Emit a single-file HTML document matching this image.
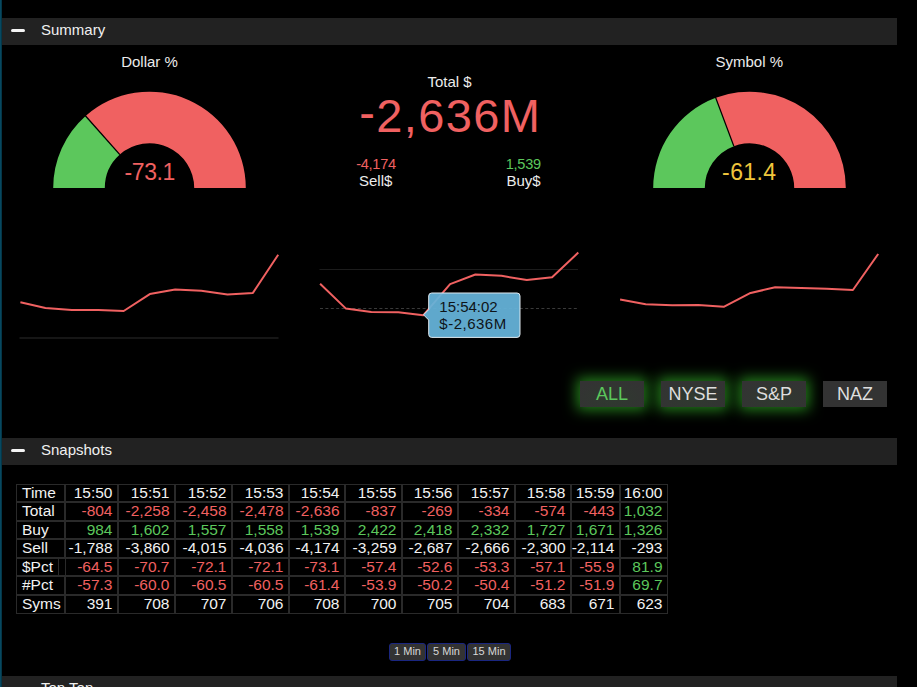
<!DOCTYPE html>
<html><head><meta charset="utf-8">
<style>
html,body{margin:0;padding:0;background:#000;width:917px;height:687px;overflow:hidden;}
body{position:relative;font-family:"Liberation Sans",sans-serif;color:#ececec;}
.a{position:absolute;white-space:nowrap;}
.edge{position:absolute;left:0;top:0;width:1px;height:687px;background:#074860;border-right:1px solid #043748;}
.hdr{position:absolute;left:2px;width:895px;height:27px;background:#222;}
.mi{position:absolute;left:8.6px;top:11px;width:14px;height:3px;background:#f4f4f4;border-radius:1.5px;}
.btn{position:absolute;top:381px;width:64px;height:26px;background:#333;font-size:18px;line-height:26px;text-align:center;color:#dedede;}
.glow{box-shadow:0 0 14px 3px rgba(44,150,34,0.85);background:radial-gradient(ellipse 60% 70% at 50% 65%,#2f3a2f,#333 100%);}
.cell{position:absolute;border:1px solid #2a2a2a;}
.sb{position:absolute;top:643px;height:16px;border:1px solid #1a2680;border-radius:3px;background:#333;color:#d8d8d8;font-size:11px;line-height:14px;text-align:center;}
</style></head>
<body>
<div class="edge"></div>
<div class="hdr" style="top:18px"><div class="mi"></div></div><div class="a" style="left:41px;top:22.30px;font-size:15px;line-height:15px;color:#f0f0f0;">Summary</div>
<div class="hdr" style="top:438px"><div class="mi"></div></div><div class="a" style="left:41px;top:442.30px;font-size:15px;line-height:15px;color:#f0f0f0;">Snapshots</div>
<div class="hdr" style="top:676px"><div class="mi"></div></div><div class="a" style="left:41px;top:680.30px;font-size:15px;line-height:15px;color:#f0f0f0;">Top Ten</div>
<svg class="a" style="left:0;top:0" width="917" height="420">
<path d="M53.20,188.00 A96.3,96.3 0 0 1 85.59,115.96 L119.83,154.56 A44.7,44.7 0 0 0 104.80,188.00 Z" fill="#5cc75c"/><path d="M85.59,115.96 A96.3,96.3 0 0 1 245.80,188.00 L194.20,188.00 A44.7,44.7 0 0 0 119.83,154.56 Z" fill="#f06161"/><line x1="119.83" y1="154.56" x2="84.93" y2="115.22" stroke="#000" stroke-width="1.3"/>
<path d="M653.20,188.00 A96.3,96.3 0 0 1 715.74,97.81 L733.83,146.14 A44.7,44.7 0 0 0 704.80,188.00 Z" fill="#5cc75c"/><path d="M715.74,97.81 A96.3,96.3 0 0 1 845.80,188.00 L794.20,188.00 A44.7,44.7 0 0 0 733.83,146.14 Z" fill="#f06161"/><line x1="733.83" y1="146.14" x2="715.39" y2="96.87" stroke="#000" stroke-width="1.3"/>
<line x1="19.5" y1="338" x2="278.5" y2="338" stroke="#161616" stroke-width="2"/>
<line x1="319.5" y1="269.5" x2="578" y2="269.5" stroke="#1c1c1c" stroke-width="1"/>
<line x1="320" y1="308.5" x2="577" y2="308.5" stroke="#3a3a3a" stroke-width="1" stroke-dasharray="3,2.4"/>
<polyline points="20.4,302.3 45.4,307.9 71.8,309.9 98.5,309.9 123.7,311.0 149.8,294.1 175.2,289.5 201.3,290.8 227.5,294.4 252.9,292.9 278.2,254.8" fill="none" stroke="#f06161" stroke-width="2" stroke-linejoin="round"/>
<polyline points="320.1,283.8 345.7,308.4 371.3,312.0 398.3,312.3 423.2,315.3 450.1,284.1 475.4,274.5 501.5,275.8 526.8,280.1 552.1,277.2 578.3,252.6" fill="none" stroke="#f06161" stroke-width="2" stroke-linejoin="round"/>
<polyline points="620.1,299.5 645.7,304.2 672.2,305.2 698.3,304.9 723.7,306.8 749.6,293.3 775.2,287.2 801.3,287.9 826.7,288.8 852.9,290.0 878.2,254.0" fill="none" stroke="#f06161" stroke-width="2" stroke-linejoin="round"/>
</svg>
<div class="a" style="left:-0.5px;width:300px;text-align:center;top:53.90px;font-size:15px;line-height:15px;color:#ececec;">Dollar %</div>
<div class="a" style="left:599.3px;width:300px;text-align:center;top:53.90px;font-size:15px;line-height:15px;color:#ececec;">Symbol %</div>
<div class="a" style="left:299.6px;width:300px;text-align:center;top:74.30px;font-size:15px;line-height:15px;color:#ececec;">Total $</div>
<div class="a" style="left:300.3px;width:300px;text-align:center;top:91.91px;font-size:47px;line-height:47px;color:#f06161;letter-spacing:1.4px"><span style="position:relative;top:-3px">-</span>2,636M</div>
<div class="a" style="left:226px;width:300px;text-align:center;top:156.84px;font-size:14.6px;line-height:14.6px;color:#f06161;letter-spacing:-0.3px">-4,174</div>
<div class="a" style="left:225.7px;width:300px;text-align:center;top:172.80px;font-size:15px;line-height:15px;color:#ececec;">Sell$</div>
<div class="a" style="left:373.29999999999995px;width:300px;text-align:center;top:156.84px;font-size:14.6px;line-height:14.6px;color:#5cc75c;letter-spacing:-0.3px">1,539</div>
<div class="a" style="left:373.5px;width:300px;text-align:center;top:172.80px;font-size:15px;line-height:15px;color:#ececec;">Buy$</div>
<div class="a" style="left:-0.30000000000001137px;width:300px;text-align:center;top:161.43px;font-size:23px;line-height:23px;color:#f06161;letter-spacing:-0.4px">-73.1</div>
<div class="a" style="left:599.3px;width:300px;text-align:center;top:161.43px;font-size:23px;line-height:23px;color:#f0c53c;letter-spacing:0.4px">-61.4</div>
<svg class="a" style="left:415px;top:285px" width="115" height="60">
<path d="M13.7,11 Q13.7,8 16.7,8 L102,8 Q105,8 105,11 L105,49.4 Q105,52.4 102,52.4 L16.7,52.4 Q13.7,52.4 13.7,49.4 L13.7,35 L8.5,29.8 L13.7,24.6 Z" fill="rgba(101,179,217,0.94)" stroke="#dfe8ee" stroke-width="1"/>
</svg>
<div class="a" style="left:439.3px;top:298.90px;font-size:15px;line-height:15px;color:#0e1418;">15:54:02</div>
<div class="a" style="left:439.3px;top:315.50px;font-size:15px;line-height:15px;color:#0e1418;letter-spacing:0.5px">$-2,636M</div>
<div class="btn glow" style="left:580px;color:#5cc75c">ALL</div>
<div class="btn glow" style="left:661px;color:#dedede">NYSE</div>
<div class="btn glow" style="left:742px;color:#dedede">S&amp;P</div>
<div class="btn" style="left:823px;color:#dedede">NAZ</div>
<div class="cell" style="left:16px;top:484px;width:47px;height:16px"></div><div class="a" style="left:22px;top:485.08px;font-size:15.5px;line-height:15.5px;color:#f2f2f2;">Time</div><div class="cell" style="left:65px;top:484px;width:51px;height:16px"></div><div class="a" style="left:-187.5px;width:300px;text-align:right;top:485.08px;font-size:15.5px;line-height:15.5px;color:#f2f2f2;">15:50</div><div class="cell" style="left:118px;top:484px;width:55px;height:16px"></div><div class="a" style="left:-130.5px;width:300px;text-align:right;top:485.08px;font-size:15.5px;line-height:15.5px;color:#f2f2f2;">15:51</div><div class="cell" style="left:175px;top:484px;width:55px;height:16px"></div><div class="a" style="left:-73.5px;width:300px;text-align:right;top:485.08px;font-size:15.5px;line-height:15.5px;color:#f2f2f2;">15:52</div><div class="cell" style="left:232px;top:484px;width:55px;height:16px"></div><div class="a" style="left:-16.5px;width:300px;text-align:right;top:485.08px;font-size:15.5px;line-height:15.5px;color:#f2f2f2;">15:53</div><div class="cell" style="left:289px;top:484px;width:54px;height:16px"></div><div class="a" style="left:39.5px;width:300px;text-align:right;top:485.08px;font-size:15.5px;line-height:15.5px;color:#f2f2f2;">15:54</div><div class="cell" style="left:345px;top:484px;width:55px;height:16px"></div><div class="a" style="left:96.5px;width:300px;text-align:right;top:485.08px;font-size:15.5px;line-height:15.5px;color:#f2f2f2;">15:55</div><div class="cell" style="left:402px;top:484px;width:54px;height:16px"></div><div class="a" style="left:152.5px;width:300px;text-align:right;top:485.08px;font-size:15.5px;line-height:15.5px;color:#f2f2f2;">15:56</div><div class="cell" style="left:458px;top:484px;width:55px;height:16px"></div><div class="a" style="left:209.5px;width:300px;text-align:right;top:485.08px;font-size:15.5px;line-height:15.5px;color:#f2f2f2;">15:57</div><div class="cell" style="left:515px;top:484px;width:54px;height:16px"></div><div class="a" style="left:265.5px;width:300px;text-align:right;top:485.08px;font-size:15.5px;line-height:15.5px;color:#f2f2f2;">15:58</div><div class="cell" style="left:571px;top:484px;width:47px;height:16px"></div><div class="a" style="left:314.5px;width:300px;text-align:right;top:485.08px;font-size:15.5px;line-height:15.5px;color:#f2f2f2;">15:59</div><div class="cell" style="left:620px;top:484px;width:46px;height:16px"></div><div class="a" style="left:362.5px;width:300px;text-align:right;top:485.08px;font-size:15.5px;line-height:15.5px;color:#f2f2f2;">16:00</div><div class="cell" style="left:16px;top:502px;width:47px;height:17px"></div><div class="a" style="left:22px;top:503.08px;font-size:15.5px;line-height:15.5px;color:#f2f2f2;">Total</div><div class="cell" style="left:65px;top:502px;width:51px;height:17px"></div><div class="a" style="left:-187.5px;width:300px;text-align:right;top:503.08px;font-size:15.5px;line-height:15.5px;color:#f06161;">-804</div><div class="cell" style="left:118px;top:502px;width:55px;height:17px"></div><div class="a" style="left:-130.5px;width:300px;text-align:right;top:503.08px;font-size:15.5px;line-height:15.5px;color:#f06161;">-2,258</div><div class="cell" style="left:175px;top:502px;width:55px;height:17px"></div><div class="a" style="left:-73.5px;width:300px;text-align:right;top:503.08px;font-size:15.5px;line-height:15.5px;color:#f06161;">-2,458</div><div class="cell" style="left:232px;top:502px;width:55px;height:17px"></div><div class="a" style="left:-16.5px;width:300px;text-align:right;top:503.08px;font-size:15.5px;line-height:15.5px;color:#f06161;">-2,478</div><div class="cell" style="left:289px;top:502px;width:54px;height:17px"></div><div class="a" style="left:39.5px;width:300px;text-align:right;top:503.08px;font-size:15.5px;line-height:15.5px;color:#f06161;">-2,636</div><div class="cell" style="left:345px;top:502px;width:55px;height:17px"></div><div class="a" style="left:96.5px;width:300px;text-align:right;top:503.08px;font-size:15.5px;line-height:15.5px;color:#f06161;">-837</div><div class="cell" style="left:402px;top:502px;width:54px;height:17px"></div><div class="a" style="left:152.5px;width:300px;text-align:right;top:503.08px;font-size:15.5px;line-height:15.5px;color:#f06161;">-269</div><div class="cell" style="left:458px;top:502px;width:55px;height:17px"></div><div class="a" style="left:209.5px;width:300px;text-align:right;top:503.08px;font-size:15.5px;line-height:15.5px;color:#f06161;">-334</div><div class="cell" style="left:515px;top:502px;width:54px;height:17px"></div><div class="a" style="left:265.5px;width:300px;text-align:right;top:503.08px;font-size:15.5px;line-height:15.5px;color:#f06161;">-574</div><div class="cell" style="left:571px;top:502px;width:47px;height:17px"></div><div class="a" style="left:314.5px;width:300px;text-align:right;top:503.08px;font-size:15.5px;line-height:15.5px;color:#f06161;">-443</div><div class="cell" style="left:620px;top:502px;width:46px;height:17px"></div><div class="a" style="left:362.5px;width:300px;text-align:right;top:503.08px;font-size:15.5px;line-height:15.5px;color:#5cc75c;">1,032</div><div class="cell" style="left:16px;top:521px;width:47px;height:16px"></div><div class="a" style="left:22px;top:522.08px;font-size:15.5px;line-height:15.5px;color:#f2f2f2;">Buy</div><div class="cell" style="left:65px;top:521px;width:51px;height:16px"></div><div class="a" style="left:-187.5px;width:300px;text-align:right;top:522.08px;font-size:15.5px;line-height:15.5px;color:#5cc75c;">984</div><div class="cell" style="left:118px;top:521px;width:55px;height:16px"></div><div class="a" style="left:-130.5px;width:300px;text-align:right;top:522.08px;font-size:15.5px;line-height:15.5px;color:#5cc75c;">1,602</div><div class="cell" style="left:175px;top:521px;width:55px;height:16px"></div><div class="a" style="left:-73.5px;width:300px;text-align:right;top:522.08px;font-size:15.5px;line-height:15.5px;color:#5cc75c;">1,557</div><div class="cell" style="left:232px;top:521px;width:55px;height:16px"></div><div class="a" style="left:-16.5px;width:300px;text-align:right;top:522.08px;font-size:15.5px;line-height:15.5px;color:#5cc75c;">1,558</div><div class="cell" style="left:289px;top:521px;width:54px;height:16px"></div><div class="a" style="left:39.5px;width:300px;text-align:right;top:522.08px;font-size:15.5px;line-height:15.5px;color:#5cc75c;">1,539</div><div class="cell" style="left:345px;top:521px;width:55px;height:16px"></div><div class="a" style="left:96.5px;width:300px;text-align:right;top:522.08px;font-size:15.5px;line-height:15.5px;color:#5cc75c;">2,422</div><div class="cell" style="left:402px;top:521px;width:54px;height:16px"></div><div class="a" style="left:152.5px;width:300px;text-align:right;top:522.08px;font-size:15.5px;line-height:15.5px;color:#5cc75c;">2,418</div><div class="cell" style="left:458px;top:521px;width:55px;height:16px"></div><div class="a" style="left:209.5px;width:300px;text-align:right;top:522.08px;font-size:15.5px;line-height:15.5px;color:#5cc75c;">2,332</div><div class="cell" style="left:515px;top:521px;width:54px;height:16px"></div><div class="a" style="left:265.5px;width:300px;text-align:right;top:522.08px;font-size:15.5px;line-height:15.5px;color:#5cc75c;">1,727</div><div class="cell" style="left:571px;top:521px;width:47px;height:16px"></div><div class="a" style="left:314.5px;width:300px;text-align:right;top:522.08px;font-size:15.5px;line-height:15.5px;color:#5cc75c;">1,671</div><div class="cell" style="left:620px;top:521px;width:46px;height:16px"></div><div class="a" style="left:362.5px;width:300px;text-align:right;top:522.08px;font-size:15.5px;line-height:15.5px;color:#5cc75c;">1,326</div><div class="cell" style="left:16px;top:539px;width:47px;height:17px"></div><div class="a" style="left:22px;top:540.08px;font-size:15.5px;line-height:15.5px;color:#f2f2f2;">Sell</div><div class="cell" style="left:65px;top:539px;width:51px;height:17px"></div><div class="a" style="left:-187.5px;width:300px;text-align:right;top:540.08px;font-size:15.5px;line-height:15.5px;color:#f2f2f2;">-1,788</div><div class="cell" style="left:118px;top:539px;width:55px;height:17px"></div><div class="a" style="left:-130.5px;width:300px;text-align:right;top:540.08px;font-size:15.5px;line-height:15.5px;color:#f2f2f2;">-3,860</div><div class="cell" style="left:175px;top:539px;width:55px;height:17px"></div><div class="a" style="left:-73.5px;width:300px;text-align:right;top:540.08px;font-size:15.5px;line-height:15.5px;color:#f2f2f2;">-4,015</div><div class="cell" style="left:232px;top:539px;width:55px;height:17px"></div><div class="a" style="left:-16.5px;width:300px;text-align:right;top:540.08px;font-size:15.5px;line-height:15.5px;color:#f2f2f2;">-4,036</div><div class="cell" style="left:289px;top:539px;width:54px;height:17px"></div><div class="a" style="left:39.5px;width:300px;text-align:right;top:540.08px;font-size:15.5px;line-height:15.5px;color:#f2f2f2;">-4,174</div><div class="cell" style="left:345px;top:539px;width:55px;height:17px"></div><div class="a" style="left:96.5px;width:300px;text-align:right;top:540.08px;font-size:15.5px;line-height:15.5px;color:#f2f2f2;">-3,259</div><div class="cell" style="left:402px;top:539px;width:54px;height:17px"></div><div class="a" style="left:152.5px;width:300px;text-align:right;top:540.08px;font-size:15.5px;line-height:15.5px;color:#f2f2f2;">-2,687</div><div class="cell" style="left:458px;top:539px;width:55px;height:17px"></div><div class="a" style="left:209.5px;width:300px;text-align:right;top:540.08px;font-size:15.5px;line-height:15.5px;color:#f2f2f2;">-2,666</div><div class="cell" style="left:515px;top:539px;width:54px;height:17px"></div><div class="a" style="left:265.5px;width:300px;text-align:right;top:540.08px;font-size:15.5px;line-height:15.5px;color:#f2f2f2;">-2,300</div><div class="cell" style="left:571px;top:539px;width:47px;height:17px"></div><div class="a" style="left:314.5px;width:300px;text-align:right;top:540.08px;font-size:15.5px;line-height:15.5px;color:#f2f2f2;">-2,114</div><div class="cell" style="left:620px;top:539px;width:46px;height:17px"></div><div class="a" style="left:362.5px;width:300px;text-align:right;top:540.08px;font-size:15.5px;line-height:15.5px;color:#f2f2f2;">-293</div><div class="cell" style="left:16px;top:558px;width:41px;height:16px"></div><div class="cell" style="left:59px;top:558px;width:6px;height:16px;border-left:none;border-right:none"></div><div class="a" style="left:22px;top:559.08px;font-size:15.5px;line-height:15.5px;color:#f2f2f2;">$Pct</div><div class="cell" style="left:65px;top:558px;width:51px;height:16px"></div><div class="a" style="left:-187.5px;width:300px;text-align:right;top:559.08px;font-size:15.5px;line-height:15.5px;color:#f06161;">-64.5</div><div class="cell" style="left:118px;top:558px;width:55px;height:16px"></div><div class="a" style="left:-130.5px;width:300px;text-align:right;top:559.08px;font-size:15.5px;line-height:15.5px;color:#f06161;">-70.7</div><div class="cell" style="left:175px;top:558px;width:55px;height:16px"></div><div class="a" style="left:-73.5px;width:300px;text-align:right;top:559.08px;font-size:15.5px;line-height:15.5px;color:#f06161;">-72.1</div><div class="cell" style="left:232px;top:558px;width:55px;height:16px"></div><div class="a" style="left:-16.5px;width:300px;text-align:right;top:559.08px;font-size:15.5px;line-height:15.5px;color:#f06161;">-72.1</div><div class="cell" style="left:289px;top:558px;width:54px;height:16px"></div><div class="a" style="left:39.5px;width:300px;text-align:right;top:559.08px;font-size:15.5px;line-height:15.5px;color:#f06161;">-73.1</div><div class="cell" style="left:345px;top:558px;width:55px;height:16px"></div><div class="a" style="left:96.5px;width:300px;text-align:right;top:559.08px;font-size:15.5px;line-height:15.5px;color:#f06161;">-57.4</div><div class="cell" style="left:402px;top:558px;width:54px;height:16px"></div><div class="a" style="left:152.5px;width:300px;text-align:right;top:559.08px;font-size:15.5px;line-height:15.5px;color:#f06161;">-52.6</div><div class="cell" style="left:458px;top:558px;width:55px;height:16px"></div><div class="a" style="left:209.5px;width:300px;text-align:right;top:559.08px;font-size:15.5px;line-height:15.5px;color:#f06161;">-53.3</div><div class="cell" style="left:515px;top:558px;width:54px;height:16px"></div><div class="a" style="left:265.5px;width:300px;text-align:right;top:559.08px;font-size:15.5px;line-height:15.5px;color:#f06161;">-57.1</div><div class="cell" style="left:571px;top:558px;width:47px;height:16px"></div><div class="a" style="left:314.5px;width:300px;text-align:right;top:559.08px;font-size:15.5px;line-height:15.5px;color:#f06161;">-55.9</div><div class="cell" style="left:620px;top:558px;width:46px;height:16px"></div><div class="a" style="left:362.5px;width:300px;text-align:right;top:559.08px;font-size:15.5px;line-height:15.5px;color:#5cc75c;">81.9</div><div class="cell" style="left:16px;top:576px;width:47px;height:17px"></div><div class="a" style="left:22px;top:577.08px;font-size:15.5px;line-height:15.5px;color:#f2f2f2;">#Pct</div><div class="cell" style="left:65px;top:576px;width:51px;height:17px"></div><div class="a" style="left:-187.5px;width:300px;text-align:right;top:577.08px;font-size:15.5px;line-height:15.5px;color:#f06161;">-57.3</div><div class="cell" style="left:118px;top:576px;width:55px;height:17px"></div><div class="a" style="left:-130.5px;width:300px;text-align:right;top:577.08px;font-size:15.5px;line-height:15.5px;color:#f06161;">-60.0</div><div class="cell" style="left:175px;top:576px;width:55px;height:17px"></div><div class="a" style="left:-73.5px;width:300px;text-align:right;top:577.08px;font-size:15.5px;line-height:15.5px;color:#f06161;">-60.5</div><div class="cell" style="left:232px;top:576px;width:55px;height:17px"></div><div class="a" style="left:-16.5px;width:300px;text-align:right;top:577.08px;font-size:15.5px;line-height:15.5px;color:#f06161;">-60.5</div><div class="cell" style="left:289px;top:576px;width:54px;height:17px"></div><div class="a" style="left:39.5px;width:300px;text-align:right;top:577.08px;font-size:15.5px;line-height:15.5px;color:#f06161;">-61.4</div><div class="cell" style="left:345px;top:576px;width:55px;height:17px"></div><div class="a" style="left:96.5px;width:300px;text-align:right;top:577.08px;font-size:15.5px;line-height:15.5px;color:#f06161;">-53.9</div><div class="cell" style="left:402px;top:576px;width:54px;height:17px"></div><div class="a" style="left:152.5px;width:300px;text-align:right;top:577.08px;font-size:15.5px;line-height:15.5px;color:#f06161;">-50.2</div><div class="cell" style="left:458px;top:576px;width:55px;height:17px"></div><div class="a" style="left:209.5px;width:300px;text-align:right;top:577.08px;font-size:15.5px;line-height:15.5px;color:#f06161;">-50.4</div><div class="cell" style="left:515px;top:576px;width:54px;height:17px"></div><div class="a" style="left:265.5px;width:300px;text-align:right;top:577.08px;font-size:15.5px;line-height:15.5px;color:#f06161;">-51.2</div><div class="cell" style="left:571px;top:576px;width:47px;height:17px"></div><div class="a" style="left:314.5px;width:300px;text-align:right;top:577.08px;font-size:15.5px;line-height:15.5px;color:#f06161;">-51.9</div><div class="cell" style="left:620px;top:576px;width:46px;height:17px"></div><div class="a" style="left:362.5px;width:300px;text-align:right;top:577.08px;font-size:15.5px;line-height:15.5px;color:#5cc75c;">69.7</div><div class="cell" style="left:16px;top:595px;width:47px;height:17px"></div><div class="a" style="left:22px;top:596.08px;font-size:15.5px;line-height:15.5px;color:#f2f2f2;">Syms</div><div class="cell" style="left:65px;top:595px;width:51px;height:17px"></div><div class="a" style="left:-187.5px;width:300px;text-align:right;top:596.08px;font-size:15.5px;line-height:15.5px;color:#f2f2f2;">391</div><div class="cell" style="left:118px;top:595px;width:55px;height:17px"></div><div class="a" style="left:-130.5px;width:300px;text-align:right;top:596.08px;font-size:15.5px;line-height:15.5px;color:#f2f2f2;">708</div><div class="cell" style="left:175px;top:595px;width:55px;height:17px"></div><div class="a" style="left:-73.5px;width:300px;text-align:right;top:596.08px;font-size:15.5px;line-height:15.5px;color:#f2f2f2;">707</div><div class="cell" style="left:232px;top:595px;width:55px;height:17px"></div><div class="a" style="left:-16.5px;width:300px;text-align:right;top:596.08px;font-size:15.5px;line-height:15.5px;color:#f2f2f2;">706</div><div class="cell" style="left:289px;top:595px;width:54px;height:17px"></div><div class="a" style="left:39.5px;width:300px;text-align:right;top:596.08px;font-size:15.5px;line-height:15.5px;color:#f2f2f2;">708</div><div class="cell" style="left:345px;top:595px;width:55px;height:17px"></div><div class="a" style="left:96.5px;width:300px;text-align:right;top:596.08px;font-size:15.5px;line-height:15.5px;color:#f2f2f2;">700</div><div class="cell" style="left:402px;top:595px;width:54px;height:17px"></div><div class="a" style="left:152.5px;width:300px;text-align:right;top:596.08px;font-size:15.5px;line-height:15.5px;color:#f2f2f2;">705</div><div class="cell" style="left:458px;top:595px;width:55px;height:17px"></div><div class="a" style="left:209.5px;width:300px;text-align:right;top:596.08px;font-size:15.5px;line-height:15.5px;color:#f2f2f2;">704</div><div class="cell" style="left:515px;top:595px;width:54px;height:17px"></div><div class="a" style="left:265.5px;width:300px;text-align:right;top:596.08px;font-size:15.5px;line-height:15.5px;color:#f2f2f2;">683</div><div class="cell" style="left:571px;top:595px;width:47px;height:17px"></div><div class="a" style="left:314.5px;width:300px;text-align:right;top:596.08px;font-size:15.5px;line-height:15.5px;color:#f2f2f2;">671</div><div class="cell" style="left:620px;top:595px;width:46px;height:17px"></div><div class="a" style="left:362.5px;width:300px;text-align:right;top:596.08px;font-size:15.5px;line-height:15.5px;color:#f2f2f2;">623</div>
<div class="sb" style="left:389px;width:35px">1 Min</div>
<div class="sb" style="left:427px;width:37px">5 Min</div>
<div class="sb" style="left:467px;width:42px">15 Min</div>
</body></html>
